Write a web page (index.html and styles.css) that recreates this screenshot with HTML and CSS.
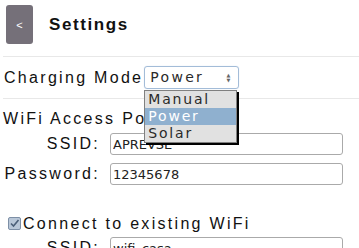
FILE: index.html
```html
<!DOCTYPE html>
<html lang="en">
<head>
    <meta charset="UTF-8">
    <meta name="viewport" content="width=device-width, initial-scale=1.0">
    <title>Settings</title>
    <link rel="stylesheet" href="styles.css">
</head>
<body>
    <div class="header">
        <button class="back">&lt;</button>
        <h1>Settings</h1>
    </div>
    <div class="section mode-row">
        <label for="mode">Charging Mode</label>
        <div class="select-wrap">
            <div class="select" id="mode">Power<span class="arrows"><span>&#9650;</span><span>&#9660;</span></span></div>
            <ul class="options">
                <li>Manual</li>
                <li class="active">Power</li>
                <li>Solar</li>
            </ul>
        </div>
    </div>
    <div class="section">
        <div class="title">WiFi Access Point</div>
        <div class="row">
            <label for="ap-ssid">SSID:</label>
            <input type="text" id="ap-ssid" value="APREVSE">
        </div>
        <div class="row">
            <label for="ap-pass">Password:</label>
            <input type="text" id="ap-pass" value="12345678">
        </div>
        <label class="title check">
            <span class="box"><svg width="11" height="11" viewBox="0 0 11 11"><path d="M2 5.5 L4.5 8 L9.5 2" fill="none" stroke="#4b5f78" stroke-width="1.6"/></svg></span>
            Connect to existing WiFi
        </label>
        <div class="row">
            <label for="sta-ssid">SSID:</label>
            <input type="text" id="sta-ssid" value="wifi_casa">
        </div>
    </div>
</body>
</html>
```

FILE: styles.css
```css
body {
    margin: 0;
    padding: 0 0 0 3px;
    font-family: "Liberation Sans", Arial, sans-serif;
    color: #111;
    background: #fff;
    overflow: hidden;
    height: 248px;
}
.header {
    display: flex;
    align-items: center;
    height: 56px;
    border-bottom: 1px solid #e8e8e8;
}
.back {
    width: 27px;
    height: 39px;
    margin: -7px 0 0 3px;
    border: none;
    border-radius: 3px;
    background: #757079;
    color: #fff;
    font-size: 11px;
    padding: 0;
}
.header h1 {
    margin: -6px 0 0 16px;
    font-size: 17px;
    letter-spacing: 1.6px;
    font-weight: bold;
}
.section {
    font-size: 16px;
    letter-spacing: 2.3px;
}
.mode-row {
    display: flex;
    align-items: center;
    height: 41px;
    border-bottom: 1px solid #e8e8e8;
}
.mode-row label {
    margin-left: 1px;
}
.select-wrap {
    position: relative;
    margin-left: 1px;
}
.select {
    width: 88px;
    height: 21px;
    border: 1px solid #a3bcd8;
    border-radius: 3px;
    box-shadow: 0 0 1px #c3d5ea;
    font-family: "DejaVu Sans", sans-serif;
    font-size: 14px;
    letter-spacing: 2.3px;
    line-height: 21px;
    padding-left: 5px;
    position: relative;
    color: #2a2a2a;
}
.arrows {
    position: absolute;
    right: 8px;
    top: 6px;
    display: flex;
    flex-direction: column;
    font-size: 5px;
    line-height: 5px;
    letter-spacing: 0;
    color: #666;
}
.options {
    position: absolute;
    left: 0;
    top: 24px;
    width: 91px;
    margin: 0;
    padding: 0;
    list-style: none;
    background: #e1e1e1;
    border: 1px solid #808080;
    box-shadow: 2px 2px 0 #000;
    font-family: "DejaVu Sans", sans-serif;
    font-size: 14px;
    letter-spacing: 1.8px;
    color: #2a2a2a;
}
.options li {
    height: 17px;
    line-height: 17px;
    padding-left: 3px;
}
.options li.active {
    background: #8fb0cf;
    color: #fff;
}
.title {
    display: block;
    margin-top: 11px;
    height: 15px;
}
.row {
    display: grid;
    grid-template-columns: 97px 233px;
    column-gap: 10px;
    align-items: center;
    margin-top: 8px;
}
.row label {
    text-align: right;
}
.row input {
    height: 22px;
    box-sizing: border-box;
    border: 1px solid #aaa;
    border-radius: 3px;
    font-family: "DejaVu Sans", sans-serif;
    font-size: 13px;
    padding: 0 2px;
    color: #222;
}
.check {
    display: flex;
    align-items: center;
    margin-top: 31px;
}
.box {
    width: 11px;
    height: 11px;
    margin: 0 2px 0 5px;
    border: 1px solid #7d8fa6;
    border-radius: 2px;
    background: #b9c7d8;
    display: flex;
}
.check + .row {
    margin-top: 6px;
}
```
